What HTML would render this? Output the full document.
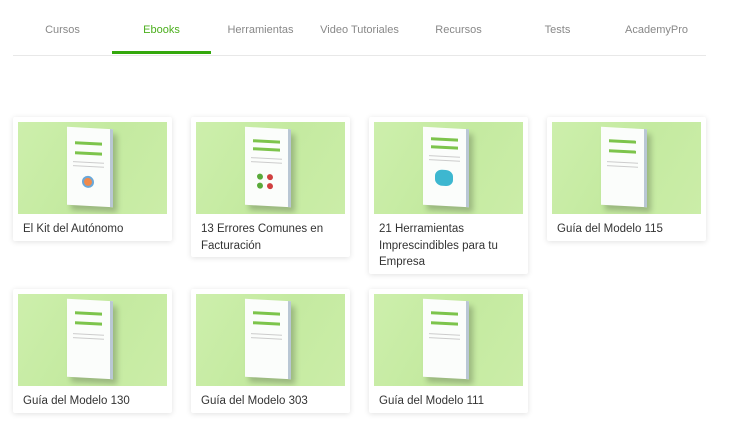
<!DOCTYPE html>
<html><head><meta charset="utf-8"><style>
*{margin:0;padding:0;box-sizing:border-box}
body{width:730px;height:435px;background:#fff;font-family:"Liberation Sans",sans-serif;position:relative;overflow:hidden}
.nav{position:absolute;left:13px;top:0;width:693px;height:56px;border-bottom:1px solid #e8e8e8}
.tab{position:absolute;top:24px;width:99px;text-align:center;font-size:11px;color:#888}
.tab.act{color:#4caf1e}
.ul{position:absolute;left:112px;top:51px;width:99px;height:3px;background:#34a80c}
.card{position:absolute;width:159px;background:#fff;box-shadow:0 1px 6px rgba(0,0,0,.12);border-radius:2px}
.img{position:absolute;left:5px;top:5px;width:149px;height:92px;background:linear-gradient(120deg,#cdefac,#c4eaa0 50%,#cbeda8);overflow:hidden}
.book{position:absolute;left:49px;top:6px;width:46px;height:78px;background:#fbfdfb;box-shadow:4px 5px 6px rgba(0,0,0,.22);border-right:3px solid #b9c7d4;transform:skewY(3deg)}
.book i{position:absolute;left:8px;right:8px;height:3px;background:#7dc44c}
.book b{position:absolute;left:6px;right:6px;height:1px;background:#ccc}
.t{position:absolute;left:10px;top:104px;font-size:11.5px;line-height:16.5px;color:#333;width:145px}
</style></head><body>
<div class="nav">
<div class="tab" style="left:0">Cursos</div>
<div class="tab act" style="left:99px">Ebooks</div>
<div class="tab" style="left:198px">Herramientas</div>
<div class="tab" style="left:297px">Video Tutoriales</div>
<div class="tab" style="left:396px">Recursos</div>
<div class="tab" style="left:495px">Tests</div>
<div class="tab" style="left:594px">AcademyPro</div>
</div>
<div class="ul"></div>

<div class="card" style="left:13px;top:117px;height:124px"><div class="img"><div class="book"><i style="top:14px"></i><i style="top:24px"></i><b style="top:34px"></b><b style="top:38px"></b><div style="position:absolute;left:15px;top:48px;width:12px;height:12px;border-radius:50%;background:#f08a4b;border:2px solid #6aa8d8"></div></div></div><div class="t">El Kit del Autónomo</div></div>

<div class="card" style="left:191px;top:117px;height:140px"><div class="img"><div class="book"><i style="top:12px"></i><i style="top:20px"></i><b style="top:30px"></b><b style="top:34px"></b><div style="position:absolute;left:12px;top:46px;width:6px;height:6px;border-radius:50%;background:#5aaa3a"></div><div style="position:absolute;left:22px;top:46px;width:6px;height:6px;border-radius:50%;background:#d04040"></div><div style="position:absolute;left:12px;top:55px;width:6px;height:6px;border-radius:50%;background:#5aaa3a"></div><div style="position:absolute;left:22px;top:55px;width:6px;height:6px;border-radius:50%;background:#d04040"></div></div></div><div class="t">13 Errores Comunes en Facturación</div></div>

<div class="card" style="left:369px;top:117px;height:157px"><div class="img"><div class="book"><i style="top:10px"></i><i style="top:18px"></i><b style="top:28px"></b><b style="top:32px"></b><div style="position:absolute;left:12px;top:42px;width:18px;height:16px;border-radius:40%;background:#3db7d0"></div></div></div><div class="t">21 Herramientas Imprescindibles para tu Empresa</div></div>

<div class="card" style="left:547px;top:117px;height:124px"><div class="img"><div class="book"><i style="top:12px"></i><i style="top:22px"></i><b style="top:34px"></b><b style="top:38px"></b></div></div><div class="t">Guía del Modelo 115</div></div>

<div class="card" style="left:13px;top:289px;height:124px"><div class="img"><div class="book"><i style="top:12px"></i><i style="top:22px"></i><b style="top:34px"></b><b style="top:38px"></b></div></div><div class="t">Guía del Modelo 130</div></div>

<div class="card" style="left:191px;top:289px;height:124px"><div class="img"><div class="book"><i style="top:12px"></i><i style="top:22px"></i><b style="top:34px"></b><b style="top:38px"></b></div></div><div class="t">Guía del Modelo 303</div></div>

<div class="card" style="left:369px;top:289px;height:124px"><div class="img"><div class="book"><i style="top:12px"></i><i style="top:22px"></i><b style="top:34px"></b><b style="top:38px"></b></div></div><div class="t">Guía del Modelo 111</div></div>
</body></html>
